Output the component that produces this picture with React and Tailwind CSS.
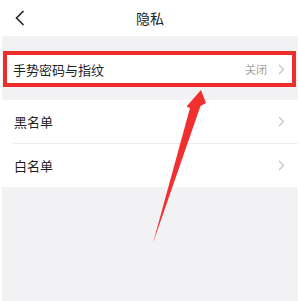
const cjk = { fontFamily: '"Noto Sans CJK SC", "Noto Sans", sans-serif' };

function Chevron({ className }) {
  return (
    <svg width="7" height="11" viewBox="0 0 7 11" className={className} fill="none">
      <path d="M1 1 L5.5 5.5 L1 10" stroke="#c4c4c8" strokeWidth="1.2" />
    </svg>
  );
}

export default function App() {
  return (
    <div className="relative w-[300px] h-[301px] bg-white overflow-hidden flex flex-col select-none" style={cjk}>

      {/* Header */}
      <div className="h-[36px] shrink-0 grid grid-cols-[40px_1fr_40px] items-center">
        <div className="pl-[15px] flex items-center">
          <svg width="10" height="16" viewBox="0 0 10 16" fill="none">
            <path d="M8.5 1 L1.5 8 L8.5 15" stroke="#222" strokeWidth="1.6" />
          </svg>
        </div>
        <p className="text-center text-[14px] text-[#222] leading-none">隐私</p>
        <div />
      </div>

      {/* Body */}
      <div className="flex-1 mx-[2px] bg-[#f2f2f4] flex flex-col">
        <div className="h-[15px]" />

        <div className="ml-[1px] mr-[2px] h-[36px] border-4 border-[#ee2d2d] bg-white flex items-center pl-[6px] pr-[7px]">
          <p className="flex-1 text-[13px] text-[#1f1f1f] leading-none">手势密码与指纹</p>
          <span className="text-[11px] text-[#a3a3a3] leading-none mr-[11px]">关闭</span>
          <Chevron />
        </div>

        <div className="h-[13px]" />

        <div className="bg-white">
          <div className="h-[43px] flex items-center pl-[12px] pr-[13px]">
            <p className="flex-1 text-[13px] text-[#1f1f1f] leading-none">黑名单</p>
            <Chevron />
          </div>
          <div className="ml-[11px] h-px bg-[#ededef]" />
          <div className="h-[43px] flex items-center pl-[12px] pr-[13px]">
            <p className="flex-1 text-[13px] text-[#1f1f1f] leading-none">白名单</p>
            <Chevron />
          </div>
        </div>
      </div>

      {/* Annotation arrow */}
      <svg className="absolute inset-0 pointer-events-none" width="300" height="301" viewBox="0 0 300 301">
        <polygon
          points="201,90 206,103 200.5,106 153,243 190,108 186.5,106.5"
          fill="#f0302f"
        />
      </svg>
    </div>
  );
}
